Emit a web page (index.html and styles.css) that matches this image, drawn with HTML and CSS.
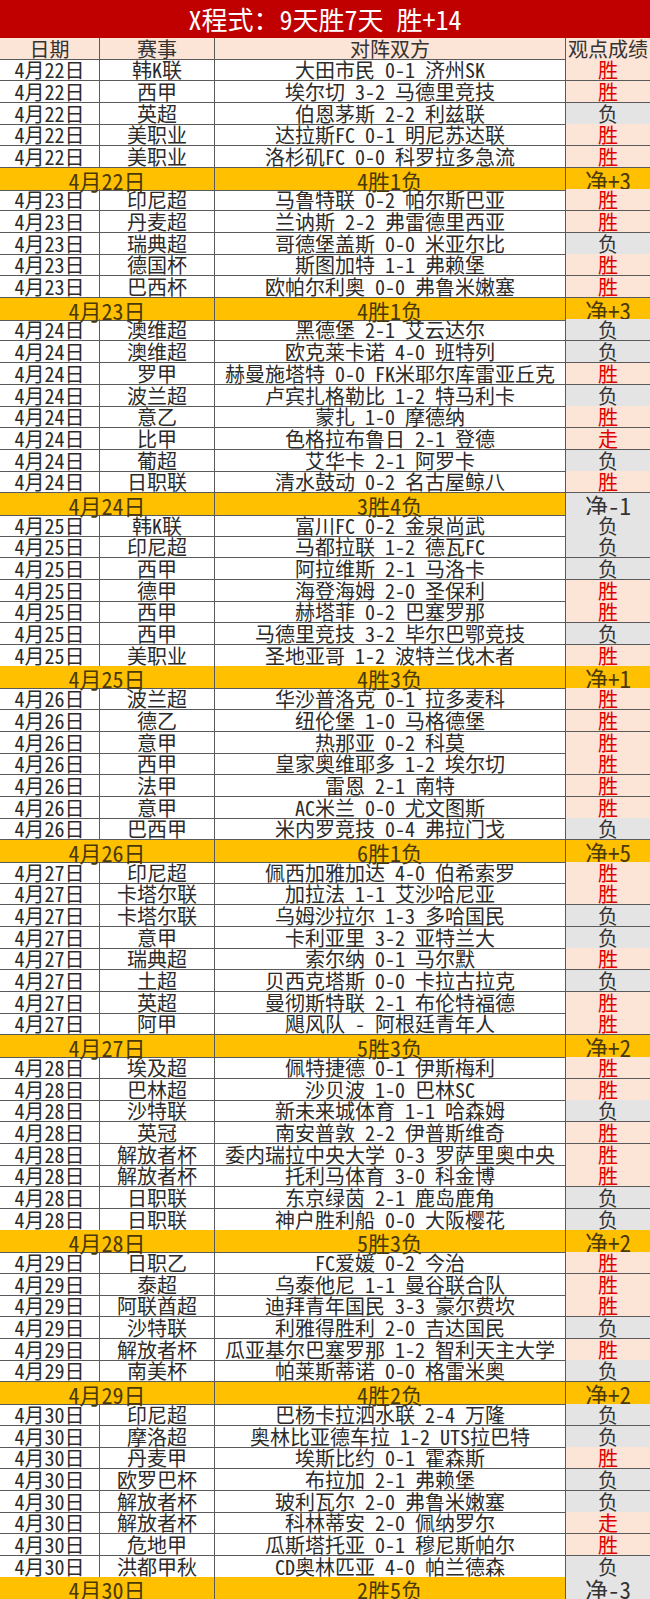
FILE: index.html
```html
<!DOCTYPE html>
<html lang="zh-CN">
<head>
<meta charset="utf-8">
<title>X程式</title>
<link rel="stylesheet" href="styles.css">
</head>
<body>
<div class="sheet">
  <div class="title">X程式：9天胜7天 胜+14</div>
  <div class="row head"><div>日期</div><div>赛事</div><div>对阵双方</div><div>观点成绩</div></div>

  <div class="row"><div>4月22日</div><div>韩K联</div><div>大田市民 0-1 济州SK</div><div class="w">胜</div></div>
  <div class="row"><div>4月22日</div><div>西甲</div><div>埃尔切 3-2 马德里竞技</div><div class="w">胜</div></div>
  <div class="row"><div>4月22日</div><div>英超</div><div>伯恩茅斯 2-2 利兹联</div><div class="l">负</div></div>
  <div class="row"><div>4月22日</div><div>美职业</div><div>达拉斯FC 0-1 明尼苏达联</div><div class="w">胜</div></div>
  <div class="row"><div>4月22日</div><div>美职业</div><div>洛杉矶FC 0-0 科罗拉多急流</div><div class="w">胜</div></div>
  <div class="row sum"><div>4月22日</div><div>4胜1负</div><div class="up">净+3</div></div>

  <div class="row"><div>4月23日</div><div>印尼超</div><div>马鲁特联 0-2 帕尔斯巴亚</div><div class="w">胜</div></div>
  <div class="row"><div>4月23日</div><div>丹麦超</div><div>兰讷斯 2-2 弗雷德里西亚</div><div class="w">胜</div></div>
  <div class="row"><div>4月23日</div><div>瑞典超</div><div>哥德堡盖斯 0-0 米亚尔比</div><div class="l">负</div></div>
  <div class="row"><div>4月23日</div><div>德国杯</div><div>斯图加特 1-1 弗赖堡</div><div class="w">胜</div></div>
  <div class="row"><div>4月23日</div><div>巴西杯</div><div>欧帕尔利奥 0-0 弗鲁米嫩塞</div><div class="w">胜</div></div>
  <div class="row sum"><div>4月23日</div><div>4胜1负</div><div class="up">净+3</div></div>

  <div class="row"><div>4月24日</div><div>澳维超</div><div>黑德堡 2-1 艾云达尔</div><div class="l">负</div></div>
  <div class="row"><div>4月24日</div><div>澳维超</div><div>欧克莱卡诺 4-0 班特列</div><div class="l">负</div></div>
  <div class="row"><div>4月24日</div><div>罗甲</div><div>赫曼施塔特 0-0 FK米耶尔库雷亚丘克</div><div class="w">胜</div></div>
  <div class="row"><div>4月24日</div><div>波兰超</div><div>卢宾扎格勒比 1-2 特马利卡</div><div class="l">负</div></div>
  <div class="row"><div>4月24日</div><div>意乙</div><div>蒙扎 1-0 摩德纳</div><div class="w">胜</div></div>
  <div class="row"><div>4月24日</div><div>比甲</div><div>色格拉布鲁日 2-1 登德</div><div class="w">走</div></div>
  <div class="row"><div>4月24日</div><div>葡超</div><div>艾华卡 2-1 阿罗卡</div><div class="l">负</div></div>
  <div class="row"><div>4月24日</div><div>日职联</div><div>清水鼓动 0-2 名古屋鲸八</div><div class="w">胜</div></div>
  <div class="row sum"><div>4月24日</div><div>3胜4负</div><div class="down">净-1</div></div>

  <div class="row"><div>4月25日</div><div>韩K联</div><div>富川FC 0-2 金泉尚武</div><div class="l">负</div></div>
  <div class="row"><div>4月25日</div><div>印尼超</div><div>马都拉联 1-2 德瓦FC</div><div class="l">负</div></div>
  <div class="row"><div>4月25日</div><div>西甲</div><div>阿拉维斯 2-1 马洛卡</div><div class="l">负</div></div>
  <div class="row"><div>4月25日</div><div>德甲</div><div>海登海姆 2-0 圣保利</div><div class="w">胜</div></div>
  <div class="row"><div>4月25日</div><div>西甲</div><div>赫塔菲 0-2 巴塞罗那</div><div class="w">胜</div></div>
  <div class="row"><div>4月25日</div><div>西甲</div><div>马德里竞技 3-2 毕尔巴鄂竞技</div><div class="l">负</div></div>
  <div class="row"><div>4月25日</div><div>美职业</div><div>圣地亚哥 1-2 波特兰伐木者</div><div class="w">胜</div></div>
  <div class="row sum"><div>4月25日</div><div>4胜3负</div><div class="up">净+1</div></div>

  <div class="row"><div>4月26日</div><div>波兰超</div><div>华沙普洛克 0-1 拉多麦科</div><div class="w">胜</div></div>
  <div class="row"><div>4月26日</div><div>德乙</div><div>纽伦堡 1-0 马格德堡</div><div class="w">胜</div></div>
  <div class="row"><div>4月26日</div><div>意甲</div><div>热那亚 0-2 科莫</div><div class="w">胜</div></div>
  <div class="row"><div>4月26日</div><div>西甲</div><div>皇家奥维耶多 1-2 埃尔切</div><div class="w">胜</div></div>
  <div class="row"><div>4月26日</div><div>法甲</div><div>雷恩 2-1 南特</div><div class="w">胜</div></div>
  <div class="row"><div>4月26日</div><div>意甲</div><div>AC米兰 0-0 尤文图斯</div><div class="w">胜</div></div>
  <div class="row"><div>4月26日</div><div>巴西甲</div><div>米内罗竞技 0-4 弗拉门戈</div><div class="l">负</div></div>
  <div class="row sum"><div>4月26日</div><div>6胜1负</div><div class="up">净+5</div></div>

  <div class="row"><div>4月27日</div><div>印尼超</div><div>佩西加雅加达 4-0 伯希索罗</div><div class="w">胜</div></div>
  <div class="row"><div>4月27日</div><div>卡塔尔联</div><div>加拉法 1-1 艾沙哈尼亚</div><div class="w">胜</div></div>
  <div class="row"><div>4月27日</div><div>卡塔尔联</div><div>乌姆沙拉尔 1-3 多哈国民</div><div class="l">负</div></div>
  <div class="row"><div>4月27日</div><div>意甲</div><div>卡利亚里 3-2 亚特兰大</div><div class="l">负</div></div>
  <div class="row"><div>4月27日</div><div>瑞典超</div><div>索尔纳 0-1 马尔默</div><div class="w">胜</div></div>
  <div class="row"><div>4月27日</div><div>土超</div><div>贝西克塔斯 0-0 卡拉古拉克</div><div class="l">负</div></div>
  <div class="row"><div>4月27日</div><div>英超</div><div>曼彻斯特联 2-1 布伦特福德</div><div class="w">胜</div></div>
  <div class="row"><div>4月27日</div><div>阿甲</div><div>飓风队 - 阿根廷青年人</div><div class="w">胜</div></div>
  <div class="row sum"><div>4月27日</div><div>5胜3负</div><div class="up">净+2</div></div>

  <div class="row"><div>4月28日</div><div>埃及超</div><div>佩特捷德 0-1 伊斯梅利</div><div class="w">胜</div></div>
  <div class="row"><div>4月28日</div><div>巴林超</div><div>沙贝波 1-0 巴林SC</div><div class="w">胜</div></div>
  <div class="row"><div>4月28日</div><div>沙特联</div><div>新未来城体育 1-1 哈森姆</div><div class="l">负</div></div>
  <div class="row"><div>4月28日</div><div>英冠</div><div>南安普敦 2-2 伊普斯维奇</div><div class="w">胜</div></div>
  <div class="row"><div>4月28日</div><div>解放者杯</div><div>委内瑞拉中央大学 0-3 罗萨里奥中央</div><div class="w">胜</div></div>
  <div class="row"><div>4月28日</div><div>解放者杯</div><div>托利马体育 3-0 科金博</div><div class="w">胜</div></div>
  <div class="row"><div>4月28日</div><div>日职联</div><div>东京绿茵 2-1 鹿岛鹿角</div><div class="l">负</div></div>
  <div class="row"><div>4月28日</div><div>日职联</div><div>神户胜利船 0-0 大阪樱花</div><div class="l">负</div></div>
  <div class="row sum"><div>4月28日</div><div>5胜3负</div><div class="up">净+2</div></div>

  <div class="row"><div>4月29日</div><div>日职乙</div><div>FC爱媛 0-2 今治</div><div class="w">胜</div></div>
  <div class="row"><div>4月29日</div><div>泰超</div><div>乌泰他尼 1-1 曼谷联合队</div><div class="w">胜</div></div>
  <div class="row"><div>4月29日</div><div>阿联酋超</div><div>迪拜青年国民 3-3 豪尔费坎</div><div class="w">胜</div></div>
  <div class="row"><div>4月29日</div><div>沙特联</div><div>利雅得胜利 2-0 吉达国民</div><div class="l">负</div></div>
  <div class="row"><div>4月29日</div><div>解放者杯</div><div>瓜亚基尔巴塞罗那 1-2 智利天主大学</div><div class="w">胜</div></div>
  <div class="row"><div>4月29日</div><div>南美杯</div><div>帕莱斯蒂诺 0-0 格雷米奥</div><div class="l">负</div></div>
  <div class="row sum"><div>4月29日</div><div>4胜2负</div><div class="up">净+2</div></div>

  <div class="row"><div>4月30日</div><div>印尼超</div><div>巴杨卡拉泗水联 2-4 万隆</div><div class="l">负</div></div>
  <div class="row"><div>4月30日</div><div>摩洛超</div><div>奥林比亚德车拉 1-2 UTS拉巴特</div><div class="l">负</div></div>
  <div class="row"><div>4月30日</div><div>丹麦甲</div><div>埃斯比约 0-1 霍森斯</div><div class="w">胜</div></div>
  <div class="row"><div>4月30日</div><div>欧罗巴杯</div><div>布拉加 2-1 弗赖堡</div><div class="l">负</div></div>
  <div class="row"><div>4月30日</div><div>解放者杯</div><div>玻利瓦尔 2-0 弗鲁米嫩塞</div><div class="l">负</div></div>
  <div class="row"><div>4月30日</div><div>解放者杯</div><div>科林蒂安 2-0 佩纳罗尔</div><div class="w">走</div></div>
  <div class="row"><div>4月30日</div><div>危地甲</div><div>瓜斯塔托亚 0-1 穆尼斯帕尔</div><div class="w">胜</div></div>
  <div class="row"><div>4月30日</div><div>洪都甲秋</div><div>CD奥林匹亚 4-0 帕兰德森</div><div class="l">负</div></div>
  <div class="row sum"><div>4月30日</div><div>2胜5负</div><div class="down">净-3</div></div>
</div>
</body>
</html>
```

FILE: styles.css
```css
html, body {
  margin: 0;
  padding: 0;
  background: #ffffff;
}

.sheet {
  width: 650px;
  font-family: "Noto Sans Mono CJK SC", "Noto Sans CJK SC", sans-serif;
  color: #2b2b2b;
}

.title {
  height: 37.5px;
  background: #c00000;
  color: #ffffff;
  font-size: 26px;
  line-height: 37px;
  text-align: center;
  white-space: pre;
}

.row {
  display: grid;
  grid-template-columns: 100px 115px 351px 84px;
  height: 21.6875px;
}

.row > div {
  box-sizing: border-box;
  border-right: 1px solid #5a5a5a;
  border-bottom: 1px solid #5a5a5a;
  text-align: center;
  font-size: 20px;
  line-height: 20px;
  padding-top: 1px;
  white-space: pre;
}

.row > div:last-child {
  border-right: none;
}

.head > div {
  background: #fce4d6;
  color: #333333;
}

.w {
  background: #fce4d6;
  color: #e00000;
}

.l {
  background: #e4e4e4;
  color: #333333;
}

.sum {
  grid-template-columns: 215px 351px 84px;
}

.sum > div {
  background: #ffc000;
  color: #4a3a08;
  font-size: 22px;
  line-height: 20px;
  padding-top: 2px;
}

.sum > .down {
  background: #e4e4e4;
  color: #333333;
}

.sum > .up,
.sum > .down {
  font-size: 23px;
}
```
